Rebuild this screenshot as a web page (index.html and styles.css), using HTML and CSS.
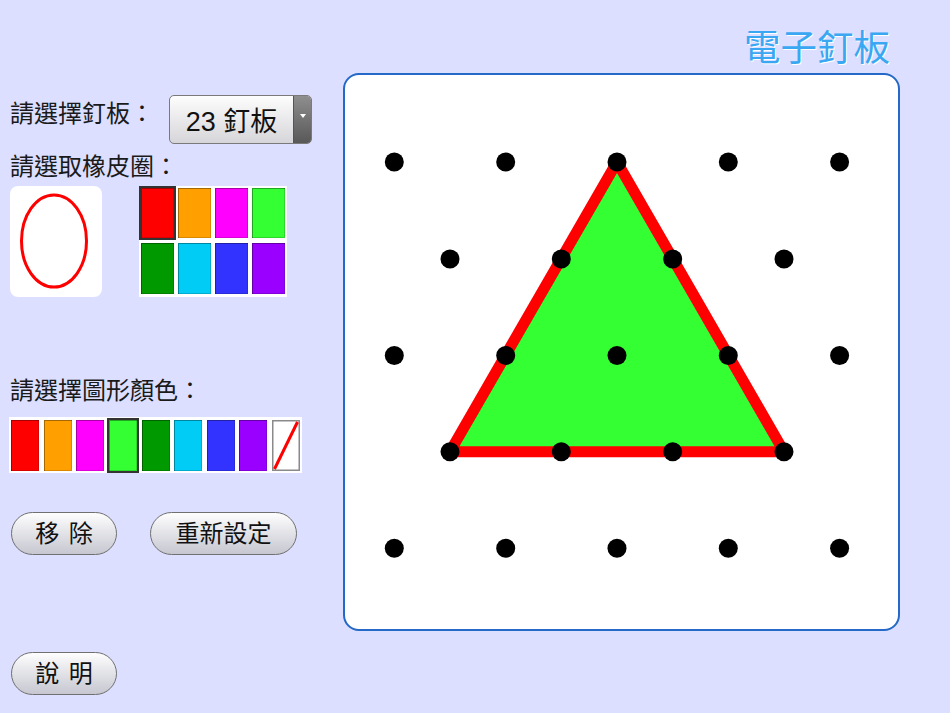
FILE: index.html
```html
<!DOCTYPE html>
<html lang="zh-Hant">
<head>
<meta charset="utf-8">
<title>電子釘板</title>
<link rel="stylesheet" href="styles.css">
</head>
<body>
<div class="app">
  <h1 class="title">電子釘板</h1>

  <section class="panel">
    <div class="row-board">
      <span class="label">請選擇釘板：</span>
      <div class="select">
        <span class="select-value">23 釘板</span>
        <span class="select-arrow"><span class="tri"></span></span>
      </div>
    </div>

    <div class="label label-band">請選取橡皮圈：</div>
    <div class="band-row">
      <div class="band-preview">
        <svg width="92" height="111" viewBox="0 0 92 111">
          <ellipse cx="44" cy="55" rx="32.5" ry="46" fill="none" stroke="#ff0000" stroke-width="3"/>
        </svg>
      </div>
      <div class="band-grid">
        <span class="cell c-red selected"></span>
        <span class="cell c-orange"></span>
        <span class="cell c-magenta"></span>
        <span class="cell c-lime"></span>
        <span class="cell c-green"></span>
        <span class="cell c-cyan"></span>
        <span class="cell c-blue"></span>
        <span class="cell c-purple"></span>
      </div>
    </div>

    <div class="label label-shape">請選擇圖形顏色：</div>
    <div class="shape-row">
      <span class="scell c-red"></span>
      <span class="scell c-orange"></span>
      <span class="scell c-magenta"></span>
      <span class="scell c-lime selected"></span>
      <span class="scell c-green"></span>
      <span class="scell c-cyan"></span>
      <span class="scell c-blue"></span>
      <span class="scell c-purple"></span>
      <span class="scell c-none">
        <svg width="28" height="51" viewBox="0 0 28 51">
          <line x1="2.5" y1="49" x2="25.5" y2="2" stroke="#ff0000" stroke-width="3"/>
        </svg>
      </span>
    </div>

    <div class="btn-row">
      <button class="btn btn-small spaced">移 除</button>
      <button class="btn btn-wide">重新設定</button>
    </div>

    <button class="btn btn-small spaced btn-help">說 明</button>
  </section>

  <div class="board">
    <svg width="553" height="554" viewBox="0 0 553 554">
      <polygon points="272,87 105,376.7 439,376.7" fill="#33ff33" stroke="#ff0000" stroke-width="11" stroke-linejoin="round"/>
      <g fill="#000">
        <circle cx="49.3" cy="87" r="9.5"/>
        <circle cx="160.7" cy="87" r="9.5"/>
        <circle cx="272" cy="87" r="9.5"/>
        <circle cx="383.3" cy="87" r="9.5"/>
        <circle cx="494.6" cy="87" r="9.5"/>

        <circle cx="105" cy="184" r="9.5"/>
        <circle cx="216.3" cy="184" r="9.5"/>
        <circle cx="327.7" cy="184" r="9.5"/>
        <circle cx="439" cy="184" r="9.5"/>

        <circle cx="49.3" cy="280.5" r="9.5"/>
        <circle cx="160.7" cy="280.5" r="9.5"/>
        <circle cx="272" cy="280.5" r="9.5"/>
        <circle cx="383.3" cy="280.5" r="9.5"/>
        <circle cx="494.6" cy="280.5" r="9.5"/>

        <circle cx="105" cy="376.7" r="9.5"/>
        <circle cx="216.3" cy="376.7" r="9.5"/>
        <circle cx="327.7" cy="376.7" r="9.5"/>
        <circle cx="439" cy="376.7" r="9.5"/>

        <circle cx="49.3" cy="473.3" r="9.5"/>
        <circle cx="160.7" cy="473.3" r="9.5"/>
        <circle cx="272" cy="473.3" r="9.5"/>
        <circle cx="383.3" cy="473.3" r="9.5"/>
        <circle cx="494.6" cy="473.3" r="9.5"/>
      </g>
    </svg>
  </div>
</div>
</body>
</html>
```

FILE: styles.css
```css
html, body {
  margin: 0;
  padding: 0;
}

body {
  background: #dcdfff;
  font-family: "Liberation Sans", "Noto Sans CJK TC", sans-serif;
  color: #111;
  width: 950px;
  height: 713px;
  overflow: hidden;
}

.app {
  display: grid;
  grid-template-columns: 343px 557px;
  grid-template-rows: 73px auto;
}

.title {
  grid-column: 2;
  grid-row: 1;
  margin: 31px 0 0 0;
  padding-right: 10px;
  text-align: right;
  font-size: 36.5px;
  line-height: 36px;
  font-weight: normal;
  color: #3aa7f2;
  text-shadow: 1px 1px 0 #ffffff;
}

.panel {
  grid-column: 1;
  grid-row: 2;
  display: flex;
  flex-direction: column;
  align-items: flex-start;
}

.label {
  font-size: 24px;
  line-height: 24px;
  color: #1a1a1a;
}

.row-board {
  margin-top: 22px;
  width: 312px;
  display: flex;
  align-items: flex-start;
  height: 49px;
}

.row-board .label {
  flex: none;
  padding-left: 10px;
  margin-top: 7px;
}

.select {
  flex: none;
  margin-left: auto;
  width: 143px;
  height: 49px;
  box-sizing: border-box;
  border: 1px solid #7a7a7a;
  border-radius: 5px;
  display: flex;
  overflow: hidden;
  background: linear-gradient(#fdfdfd, #d6d6da);
}

.select-value {
  flex: 1;
  display: flex;
  align-items: center;
  justify-content: center;
  font-size: 27px;
  color: #111;
}

.select-arrow {
  width: 18px;
  display: flex;
  justify-content: center;
  padding-top: 18px;
  box-sizing: border-box;
  background: linear-gradient(#8e8e8e, #585858);
  border-left: 1px solid #555;
}

.tri {
  width: 0;
  height: 0;
  border-left: 3px solid transparent;
  border-right: 3px solid transparent;
  border-top: 4px solid #ffffff;
}

.label-band {
  margin-top: 11px;
  padding-left: 10px;
}

.band-row {
  margin-top: 7px;
  display: flex;
}

.band-preview {
  margin-left: 10px;
  width: 92px;
  height: 111px;
  background: #ffffff;
  border-radius: 8px;
}

.band-preview svg {
  display: block;
}

.band-grid {
  margin-left: 37px;
  width: 148px;
  height: 111px;
  box-sizing: border-box;
  padding: 2px 2px 3px 2px;
  background: #ffffff;
  display: grid;
  grid-template-columns: repeat(4, 33px);
  grid-template-rows: 50px 51px;
  column-gap: 4px;
  row-gap: 5px;
}

.cell, .scell {
  display: block;
  box-shadow: inset 1px 1px 0 rgba(0, 0, 0, 0.35), inset -1px -1px 0 rgba(0, 0, 0, 0.15);
}

.selected {
  outline: 2px solid #333333;
}

.c-red { background: #ff0000; }
.c-orange { background: #ffa000; }
.c-magenta { background: #ff00ff; }
.c-lime { background: #33ff33; }
.c-green { background: #009900; }
.c-cyan { background: #00ccf5; }
.c-blue { background: #3333ff; }
.c-purple { background: #9900ff; }
.c-none {
  background: #ffffff;
  box-shadow: inset 0 0 0 1.5px #8a8a8a;
}

.c-none svg {
  display: block;
}

.label-shape {
  margin-top: 82px;
  padding-left: 10px;
}

.shape-row {
  margin-top: 14px;
  margin-left: 9px;
  width: 293px;
  height: 56px;
  box-sizing: border-box;
  padding: 3px 2px 2px 2px;
  background: #ffffff;
  display: flex;
  justify-content: space-between;
}

.scell {
  width: 28px;
  height: 51px;
}

.btn-row {
  margin-top: 39px;
  margin-left: 11px;
  display: flex;
  gap: 33px;
}

.btn {
  height: 43px;
  box-sizing: border-box;
  border: 1px solid #707070;
  border-radius: 22px;
  background: linear-gradient(#fefefe, #c6c7d0);
  font-family: "Liberation Sans", "Noto Sans CJK TC", sans-serif;
  font-size: 24px;
  line-height: 24px;
  color: #111;
  padding: 0;
  display: flex;
  align-items: center;
  justify-content: center;
}

.btn-small {
  width: 106px;
}

.btn-wide {
  width: 147px;
}

.spaced {
  word-spacing: 3px;
}

.btn-help {
  margin-top: 97px;
  margin-left: 11px;
}

.board {
  grid-column: 2;
  grid-row: 2;
  align-self: start;
  width: 557px;
  height: 558px;
  box-sizing: border-box;
  border: 2px solid #2468c8;
  border-radius: 16px;
  background: #ffffff;
  overflow: hidden;
}

.board svg {
  display: block;
}
```
